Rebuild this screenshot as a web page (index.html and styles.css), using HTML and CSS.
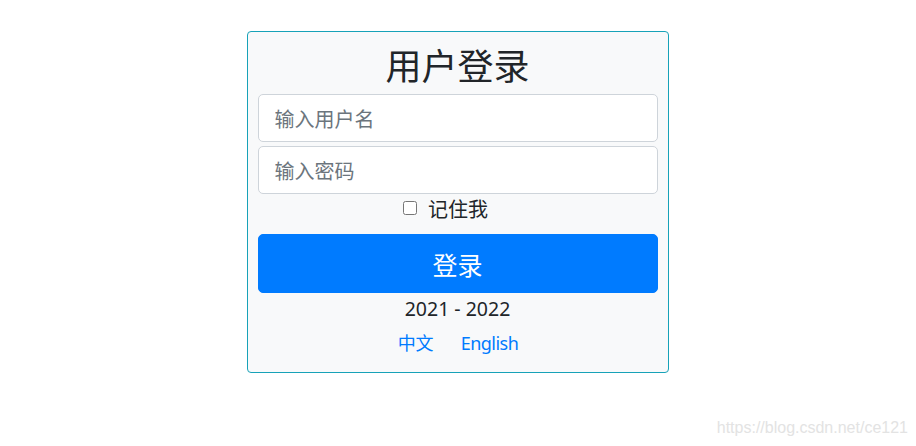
FILE: index.html
```html
<!DOCTYPE html>
<html lang="zh-CN">
<head>
<meta charset="utf-8">
<title>用户登录</title>
<link rel="stylesheet" href="styles.css">
</head>
<body>
<div class="page">
  <form class="card">
    <h2 class="title">用户登录</h2>
    <input class="field" type="text" placeholder="输入用户名">
    <input class="field field-gap" type="password" placeholder="输入密码">
    <label class="remember"><input type="checkbox" class="check"><span>记住我</span></label>
    <button type="button" class="btn">登录</button>
    <div class="years">2021 - 2022</div>
    <div class="langs"><a href="#" class="lang">中文</a><a href="#" class="lang lang-en">English</a></div>
  </form>
</div>
<div class="watermark">https://blog.csdn.net/ce121</div>
</body>
</html>
```

FILE: styles.css
```css
* { box-sizing: border-box; }
html, body { margin: 0; padding: 0; background: #fff; }
body {
  font-family: "Noto Sans", "Noto Sans CJK SC", sans-serif;
  color: #212529;
  width: 916px;
  height: 446px;
  position: relative;
  overflow: hidden;
}
.page {
  display: flex;
  justify-content: center;
  padding-top: 31px;
}
.card {
  width: 422px;
  margin: 0 0 0 -1px;
  border: 1px solid #17a2b8;
  border-radius: 4px;
  background: #f8f9fa;
  padding: 10px 10px 14px;
  display: flex;
  flex-direction: column;
  align-items: stretch;
}
.title {
  margin: 0 0 8px;
  font-family: "Noto Sans CJK SC", sans-serif;
  font-weight: 400;
  font-size: 36px;
  line-height: 44px;
  text-align: center;
  color: #212529;
}
.field {
  display: block;
  width: 100%;
  height: 48px;
  padding: 8px 16px;
  font-family: "Noto Sans CJK SC", sans-serif;
  font-size: 20px;
  border: 1px solid #ced4da;
  border-radius: 5px;
  background: #fff;
  color: #495057;
  outline: none;
}
.field::placeholder { color: #6c757d; }
.field-gap { margin-top: 4px; }
.remember {
  display: flex;
  justify-content: center;
  align-items: center;
  gap: 11px;
  height: 30px;
  font-family: "Noto Sans CJK SC", sans-serif;
  font-size: 20px;
  line-height: 30px;
  margin-left: -24px;
}
.check {
  margin: 0;
  width: 14px;
  height: 14px;
  position: relative;
  top: -1px;
}
.btn {
  margin-top: 10px;
  height: 59px;
  border: 1px solid #007bff;
  border-radius: 5px;
  background: #007bff;
  color: #fff;
  font-family: "Noto Sans CJK SC", sans-serif;
  font-size: 25px;
  line-height: 36px;
  padding: 0;
}
.years {
  margin-top: 1px;
  text-align: center;
  font-size: 19.5px;
  line-height: 30px;
}
.langs {
  margin-top: 4px;
  display: flex;
  justify-content: center;
  gap: 27px;
  line-height: 30px;
  font-size: 18px;
  margin-left: 1px;
}
.lang {
  color: #007bff;
  text-decoration: none;
}
.lang-en { letter-spacing: -0.5px; }
.watermark {
  position: absolute;
  right: 8px;
  bottom: 9px;
  font-family: "Liberation Sans", Arial, sans-serif;
  font-size: 16px;
  color: #e3e3e3;
}
```
